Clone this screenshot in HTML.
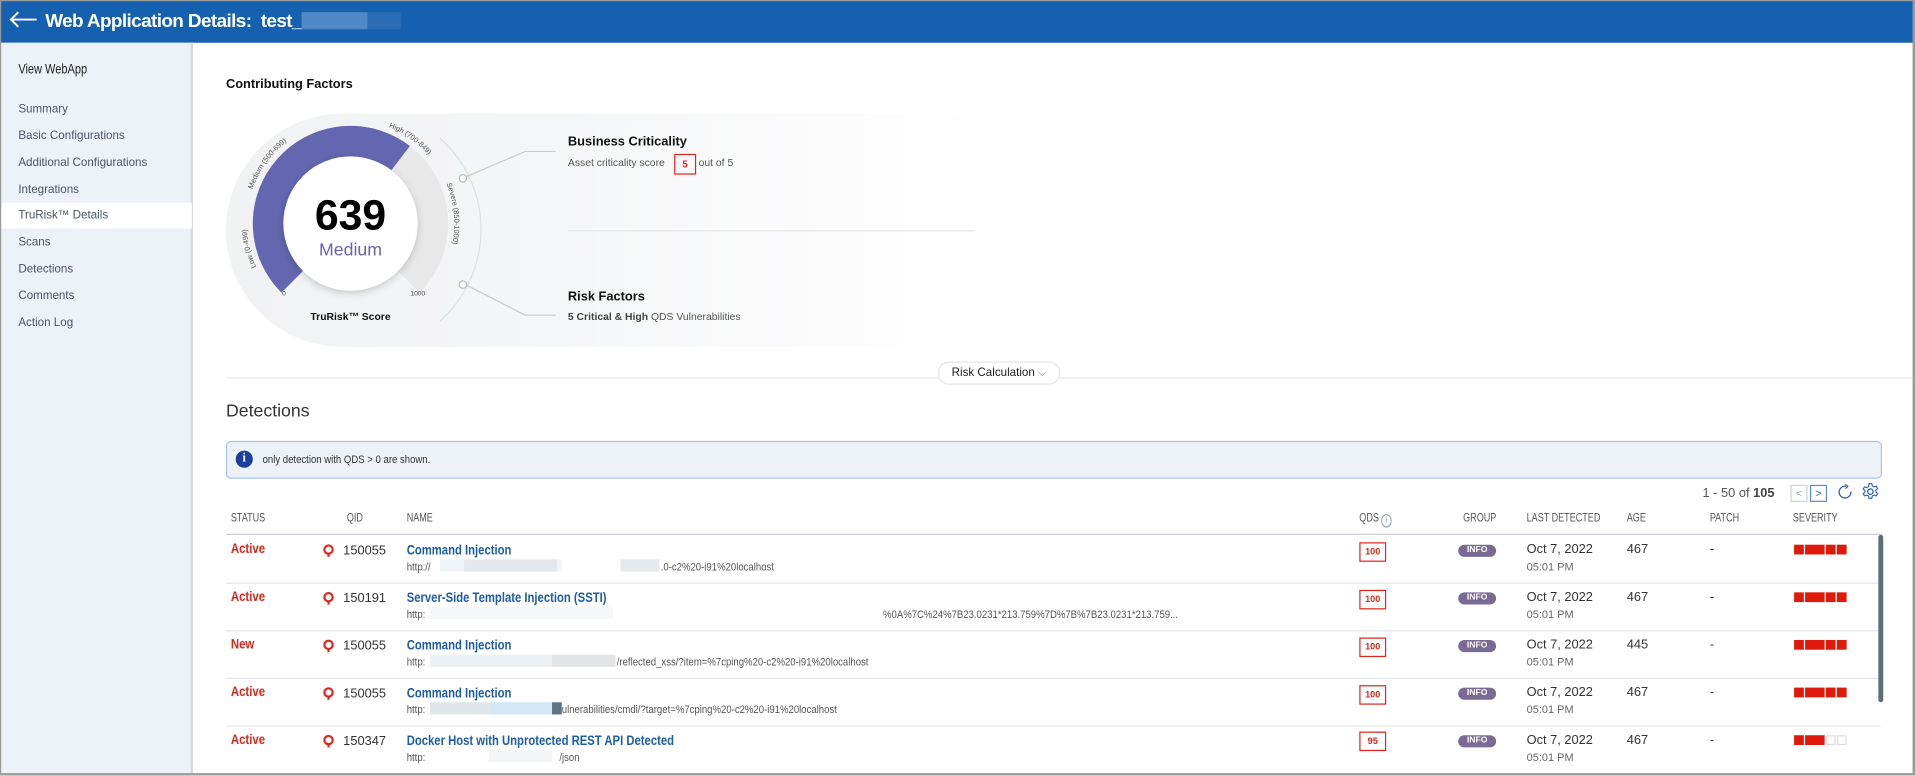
<!DOCTYPE html>
<html><head><meta charset="utf-8"><style>
html,body{margin:0;padding:0;width:1915px;height:776px;overflow:hidden;background:#fff}
#s{position:absolute;left:0;top:0;width:1568px;height:635px;transform:scale(1.22130);transform-origin:0 0;font-family:"Liberation Sans",Arial,sans-serif;color:#333;background:#fff}
.a{position:absolute;white-space:nowrap}
.c{display:inline-block;transform:scaleX(.8);transform-origin:0 0}
.side{position:absolute;left:1px;top:35px;width:155px;height:598px;background:#edf1f8;border-right:2px solid #d6dbe2}
.si{position:absolute;left:15px;font-size:9.5px;color:#4a5563}
.th{position:absolute;top:419px;font-size:9.5px;color:#555;transform:scaleX(.78);transform-origin:0 0}
.st{font-weight:bold;font-size:11px;color:#d8281c;transform:scaleX(.85);transform-origin:0 0}
.nm{font-weight:bold;font-size:11px;color:#1d5ca8;transform:scaleX(.84);transform-origin:0 0}
.url{font-size:9px;color:#555;transform:scaleX(.87);transform-origin:0 0}
.qds{position:absolute;width:20px;height:14px;border:1px solid #e0261c;color:#d8281c;font-size:7.5px;font-weight:bold;text-align:center;line-height:14px}
.info{position:absolute;width:31px;height:10px;border-radius:5px;background:#7a6a96;color:#fff;font-size:7px;font-weight:bold;text-align:center;line-height:10px}
.dt{font-size:10.5px;color:#333}
.tm{font-size:9px;color:#666}
.sev{position:absolute;height:8px}
.sev i{position:absolute;top:0;height:8px;background:#e01a0a}
.sev i.e{background:#fff;border:1px solid #ddd;box-sizing:border-box}
.rl{position:absolute;left:185px;width:1355px;height:1px;background:#e3e6ea}
.blk{position:absolute;height:10px}
.q{position:absolute;left:264px}
</style></head><body><div id="s">
<div class="a" style="left:0;top:0;width:1568px;height:635px;box-sizing:border-box;border:1px solid #9a9a9a;border-right:2px solid #9a9a9a;border-bottom:2px solid #9a9a9a;z-index:5;pointer-events:none"></div>
<!-- header -->
<div class="a" style="left:0;top:0;width:1568px;height:35px;background:#1660b0"></div>
<svg class="a" style="left:7px;top:9px" width="24" height="14" viewBox="0 0 24 14"><path d="M23 7H2M8 1L2 7l6 6" stroke="#fff" stroke-width="1.6" fill="none"/></svg>
<div class="a" style="left:37px;top:9px;font-size:15.5px;font-weight:bold;color:#fff;letter-spacing:-.5px">Web Application Details:&nbsp; test_<span style="display:inline-block;width:54px;height:14px;background:#4f89c7;vertical-align:-2px"></span><span style="display:inline-block;width:27px;height:14px;background:#2a6db6;vertical-align:-2px"></span></div>
<!-- sidebar -->
<div class="side"></div>
<div class="a" style="left:15px;top:51px;font-size:11px;color:#222;transform:scaleX(.82);transform-origin:0 0">View WebApp</div>
<div class="si" style="top:84px">Summary</div>
<div class="si" style="top:106px">Basic Configurations</div>
<div class="si" style="top:128px">Additional Configurations</div>
<div class="si" style="top:150px">Integrations</div>
<div class="a" style="left:1px;top:166px;width:156px;height:21px;background:#fff"></div>
<div class="si" style="top:171px">TruRisk™ Details</div>
<div class="si" style="top:193px">Scans</div>
<div class="si" style="top:215px">Detections</div>
<div class="si" style="top:237px">Comments</div>
<div class="si" style="top:259px">Action Log</div>
<!-- contributing -->
<div class="a" style="left:185px;top:63px;font-size:10.5px;font-weight:bold;color:#111">Contributing Factors</div>
<div class="a" style="left:185px;top:93px;width:620px;height:191px;border-radius:96px 0 0 96px;background:linear-gradient(90deg,#f1f2f4 0%,#f5f6f7 45%,#fbfbfc 75%,#fff 100%)"></div>
<svg class="a" style="left:185px;top:93px" width="620" height="191" viewBox="185 93 620 191">
<defs><filter id="sh" x="-30%" y="-30%" width="160%" height="160%"><feDropShadow dx="0" dy="2" stdDeviation="3" flood-color="#000" flood-opacity=".18"/></filter>
<path id="lp" d="M226.9 243.1 A85 85 0 1 1 347.1 243.1"/></defs>
<path d="M360 113 A100 100 0 0 1 360 263" stroke="#dde1e6" stroke-width="1" fill="none"/>
<path d="M239.6 230.4 A67 67 0 0 1 327.8 129.9" stroke="#6466b0" stroke-width="26" fill="none"/>
<path d="M327.8 129.9 A67 67 0 0 1 334.4 230.4" stroke="#e8e8e9" stroke-width="26" fill="none"/>
<circle cx="287" cy="183" r="55" fill="#fff" filter="url(#sh)"/>
<text font-size="6" fill="#555" font-family="Liberation Sans"><textPath href="#lp" startOffset="30">Low (0-499)</textPath></text>
<text font-size="6" fill="#555" font-family="Liberation Sans"><textPath href="#lp" startOffset="95">Medium (500-699)</textPath></text>
<text font-size="6" fill="#555" font-family="Liberation Sans"><textPath href="#lp" startOffset="232">High (700-849)</textPath></text>
<text font-size="6" fill="#555" font-family="Liberation Sans"><textPath href="#lp" startOffset="300">Severe (850-1000)</textPath></text>
<text x="231" y="242" font-size="5.5" fill="#444">0</text>
<text x="336" y="242" font-size="5.5" fill="#444">1000</text>
<path d="M381 145 L430 124 L455 124M381 233 L430 258 L455 258" stroke="#c6ccd3" stroke-width="1" fill="none"/>
<circle cx="379" cy="146" r="3" fill="#fff" stroke="#b8bec6"/>
<circle cx="379" cy="233" r="3" fill="#fff" stroke="#b8bec6"/>
<line x1="465" y1="189" x2="798" y2="189" stroke="#e2e5e8"/>
</svg>
<div class="a" style="left:237px;top:157px;width:100px;text-align:center;font-size:35px;font-weight:bold;color:#000">639</div>
<div class="a" style="left:237px;top:197px;width:100px;text-align:center;font-size:14.5px;color:#6466b0">Medium</div>
<div class="a" style="left:237px;top:254px;width:100px;text-align:center;font-size:8.5px;font-weight:bold;color:#111">TruRisk™ Score</div>
<div class="a" style="left:465px;top:110px;font-size:10.5px;font-weight:bold;color:#111">Business Criticality</div>
<div class="a" style="left:465px;top:128px;font-size:8.5px;color:#555">Asset criticality score</div>
<div class="a" style="left:552px;top:126px;width:16px;height:15px;border:1px solid #e0261c;color:#d8281c;font-size:8px;text-align:center;line-height:15px;font-weight:bold">5</div>
<div class="a" style="left:572px;top:128px;font-size:8.5px;color:#555">out of 5</div>
<div class="a" style="left:465px;top:237px;font-size:10.5px;font-weight:bold;color:#111">Risk Factors</div>
<div class="a" style="left:465px;top:254px;font-size:8.5px;color:#555"><b style="color:#444">5 Critical &amp; High</b> QDS Vulnerabilities</div>
<!-- risk calc -->
<div class="a" style="left:185px;top:309px;width:1382px;height:1px;background:#e3e6ea"></div>
<div class="a" style="left:768px;top:296px;width:98px;height:17px;border:1px solid #e3e6ea;border-radius:9px;background:#fff;font-size:9.5px;color:#222;line-height:17px;text-align:center">Risk Calculation <span style="color:#667;font-size:9px">⌵</span></div>
<!-- detections -->
<div class="a" style="left:185px;top:329px;font-size:14.5px;color:#333">Detections</div>
<div class="a" style="left:185px;top:361px;width:1356px;height:31px;box-sizing:border-box;border:1px solid #a8c6e6;border-radius:4px;background:#edf2f9"></div>
<div class="a" style="left:193px;top:369px;width:14px;height:14px;border-radius:7px;background:#1d3f9c;color:#fff;font-size:10px;font-weight:bold;text-align:center;line-height:14px;font-family:'Liberation Serif',serif">i</div>
<div class="a" style="left:215px;top:371px;font-size:9px;color:#333;transform:scaleX(.87);transform-origin:0 0">only detection with QDS &gt; 0 are shown.</div>
<!-- pagination -->
<div class="a" style="left:1394px;top:398px;font-size:10.5px;color:#555">1 - 50 of <b style="color:#444">105</b></div>
<div class="a" style="left:1466px;top:397px;width:12px;height:12px;border:1px solid #c6d3e3;font-size:9px;color:#9ab;text-align:center;line-height:12px">&lt;</div>
<div class="a" style="left:1482px;top:397px;width:12px;height:12px;border:1px solid #5b8ccc;font-size:9px;color:#2e65b0;text-align:center;line-height:12px">&gt;</div>
<svg class="a" style="left:1504px;top:396px" width="14" height="14" viewBox="0 0 14 14"><path d="M11.5 6.5A4.8 4.8 0 1 1 7.5 2.2" stroke="#2e65b0" stroke-width="1.1" fill="none"/><path d="M7 0.5l2 1.8-2 1.8" stroke="#2e65b0" stroke-width="1" fill="none"/></svg>
<svg class="a" style="left:1524px;top:395px" width="15" height="15" viewBox="0 0 16 16"><circle cx="8" cy="8" r="2.4" stroke="#2e65b0" fill="none" stroke-width="1.1"/><path d="M6.8 1h2.4l.4 2 1.6.9 1.9-.7 1.2 2-1.5 1.4v1.8l1.5 1.4-1.2 2-1.9-.7-1.6.9-.4 2H6.8l-.4-2-1.6-.9-1.9.7-1.2-2 1.5-1.4V7.2L1.7 5.8l1.2-2 1.9.7 1.6-.9z" stroke="#2e65b0" fill="none" stroke-width="1"/></svg>
<!-- table header -->
<div class="th" style="left:189px">STATUS</div>
<div class="th" style="left:284px">QID</div>
<div class="th" style="left:333px">NAME</div>
<div class="th" style="left:1113px">QDS <span style="display:inline-block;width:9px;height:9px;border:1px solid #8aa;border-radius:50%;font-size:7px;text-align:center;line-height:9px;color:#889;vertical-align:-1px">i</span></div>
<div class="th" style="left:1198px">GROUP</div>
<div class="th" style="left:1250px">LAST DETECTED</div>
<div class="th" style="left:1332px">AGE</div>
<div class="th" style="left:1400px">PATCH</div>
<div class="th" style="left:1468px">SEVERITY</div>
<div class="a" style="left:185px;top:437px;width:1356px;height:1px;background:#c9ced6"></div>
<div class="rl" style="top:477px"></div><div class="rl" style="top:516px"></div><div class="rl" style="top:555px"></div><div class="rl" style="top:594px"></div>
<div class="a" style="left:1538px;top:438px;width:4px;height:137px;background:#5a6e7b;border-radius:2px"></div>

<div class="a st" style="left:189px;top:444px">Active</div>
<div class="a st" style="left:189px;top:483px">Active</div>
<div class="a st" style="left:189px;top:522px">New</div>
<div class="a st" style="left:189px;top:561px">Active</div>
<div class="a st" style="left:189px;top:600px">Active</div>

<svg class="q" style="top:445px" width="10" height="12" viewBox="0 0 10 12"><circle cx="5" cy="5" r="3.4" fill="none" stroke="#e0261c" stroke-width="1.8"/><path d="M5 8.2v2.8" stroke="#e0261c" stroke-width="1.8"/></svg>
<svg class="q" style="top:484px" width="10" height="12" viewBox="0 0 10 12"><circle cx="5" cy="5" r="3.4" fill="none" stroke="#e0261c" stroke-width="1.8"/><path d="M5 8.2v2.8" stroke="#e0261c" stroke-width="1.8"/></svg>
<svg class="q" style="top:523px" width="10" height="12" viewBox="0 0 10 12"><circle cx="5" cy="5" r="3.4" fill="none" stroke="#e0261c" stroke-width="1.8"/><path d="M5 8.2v2.8" stroke="#e0261c" stroke-width="1.8"/></svg>
<svg class="q" style="top:562px" width="10" height="12" viewBox="0 0 10 12"><circle cx="5" cy="5" r="3.4" fill="none" stroke="#e0261c" stroke-width="1.8"/><path d="M5 8.2v2.8" stroke="#e0261c" stroke-width="1.8"/></svg>
<svg class="q" style="top:601px" width="10" height="12" viewBox="0 0 10 12"><circle cx="5" cy="5" r="3.4" fill="none" stroke="#e0261c" stroke-width="1.8"/><path d="M5 8.2v2.8" stroke="#e0261c" stroke-width="1.8"/></svg>

<div class="a" style="left:281px;top:445px;font-size:10.5px;color:#333">150055</div>
<div class="a" style="left:281px;top:484px;font-size:10.5px;color:#333">150191</div>
<div class="a" style="left:281px;top:523px;font-size:10.5px;color:#333">150055</div>
<div class="a" style="left:281px;top:562px;font-size:10.5px;color:#333">150055</div>
<div class="a" style="left:281px;top:601px;font-size:10.5px;color:#333">150347</div>

<div class="blk" style="left:360px;top:458px;width:100px;background:#f1f4f6"></div>
<div class="blk" style="left:380px;top:458px;width:76px;background:#e2e8ec"></div>
<div class="blk" style="left:508px;top:458px;width:32px;background:#e6eaed"></div>
<div class="a nm" style="left:333px;top:445px">Command Injection</div>
<div class="a url" style="left:333px;top:459px">http://</div>
<div class="a url" style="left:541px;top:459px">.0-c2%20-i91%20localhost</div>

<div class="blk" style="left:352px;top:497px;width:150px;background:#f5f7f9"></div>
<div class="a nm" style="left:333px;top:484px">Server-Side Template Injection (SSTI)</div>
<div class="a url" style="left:333px;top:498px">http:</div>
<div class="a url" style="left:723px;top:498px">%0A%7C%24%7B23.0231*213.759%7D%7B%7B23.0231*213.759...</div>

<div class="blk" style="left:352px;top:536px;width:100px;background:#eef1f3"></div>
<div class="blk" style="left:452px;top:536px;width:52px;background:#e2e4e6"></div>
<div class="a nm" style="left:333px;top:523px">Command Injection</div>
<div class="a url" style="left:333px;top:537px">http:</div>
<div class="a url" style="left:505px;top:537px">/reflected_xss/?item=%7cping%20-c2%20-i91%20localhost</div>

<div class="blk" style="left:352px;top:575px;width:50px;background:#dfe7ea"></div>
<div class="blk" style="left:402px;top:575px;width:50px;background:#d3e8f6"></div>
<div class="blk" style="left:452px;top:575px;width:8px;background:#5e7585"></div>
<div class="a nm" style="left:333px;top:562px">Command Injection</div>
<div class="a url" style="left:333px;top:576px">http:</div>
<div class="a url" style="left:460px;top:576px">ulnerabilities/cmdi/?target=%7cping%20-c2%20-i91%20localhost</div>

<div class="blk" style="left:400px;top:614px;width:52px;background:#f4f5f6"></div>
<div class="a nm" style="left:333px;top:601px">Docker Host with Unprotected REST API Detected</div>
<div class="a url" style="left:333px;top:615px">http:</div>
<div class="a url" style="left:458px;top:615px">/json</div>

<div class="qds" style="left:1113px;top:444px">100</div>
<div class="qds" style="left:1113px;top:483px">100</div>
<div class="qds" style="left:1113px;top:522px">100</div>
<div class="qds" style="left:1113px;top:561px">100</div>
<div class="qds" style="left:1113px;top:599px">95</div>

<div class="info" style="left:1194px;top:446px">INFO</div>
<div class="info" style="left:1194px;top:485px">INFO</div>
<div class="info" style="left:1194px;top:524px">INFO</div>
<div class="info" style="left:1194px;top:563px">INFO</div>
<div class="info" style="left:1194px;top:602px">INFO</div>

<div class="a dt" style="left:1250px;top:444px">Oct 7, 2022</div><div class="a tm" style="left:1250px;top:459px">05:01 PM</div>
<div class="a dt" style="left:1250px;top:483px">Oct 7, 2022</div><div class="a tm" style="left:1250px;top:498px">05:01 PM</div>
<div class="a dt" style="left:1250px;top:522px">Oct 7, 2022</div><div class="a tm" style="left:1250px;top:537px">05:01 PM</div>
<div class="a dt" style="left:1250px;top:561px">Oct 7, 2022</div><div class="a tm" style="left:1250px;top:576px">05:01 PM</div>
<div class="a dt" style="left:1250px;top:600px">Oct 7, 2022</div><div class="a tm" style="left:1250px;top:615px">05:01 PM</div>

<div class="a dt" style="left:1332px;top:444px">467</div>
<div class="a dt" style="left:1332px;top:483px">467</div>
<div class="a dt" style="left:1332px;top:522px">445</div>
<div class="a dt" style="left:1332px;top:561px">467</div>
<div class="a dt" style="left:1332px;top:600px">467</div>

<div class="a dt" style="left:1400px;top:444px">-</div>
<div class="a dt" style="left:1400px;top:483px">-</div>
<div class="a dt" style="left:1400px;top:522px">-</div>
<div class="a dt" style="left:1400px;top:561px">-</div>
<div class="a dt" style="left:1400px;top:600px">-</div>

<div class="sev" style="left:1469px;top:446px"><i style="left:0;width:8px"></i><i style="left:9px;width:16px"></i><i style="left:26px;width:8px"></i><i style="left:35px;width:8px"></i></div>
<div class="sev" style="left:1469px;top:485px"><i style="left:0;width:8px"></i><i style="left:9px;width:16px"></i><i style="left:26px;width:8px"></i><i style="left:35px;width:8px"></i></div>
<div class="sev" style="left:1469px;top:524px"><i style="left:0;width:8px"></i><i style="left:9px;width:16px"></i><i style="left:26px;width:8px"></i><i style="left:35px;width:8px"></i></div>
<div class="sev" style="left:1469px;top:563px"><i style="left:0;width:8px"></i><i style="left:9px;width:16px"></i><i style="left:26px;width:8px"></i><i style="left:35px;width:8px"></i></div>
<div class="sev" style="left:1469px;top:602px"><i style="left:0;width:8px"></i><i style="left:9px;width:16px"></i><i class="e" style="left:26px;width:8px"></i><i class="e" style="left:35px;width:8px"></i></div>
</div></body></html>
